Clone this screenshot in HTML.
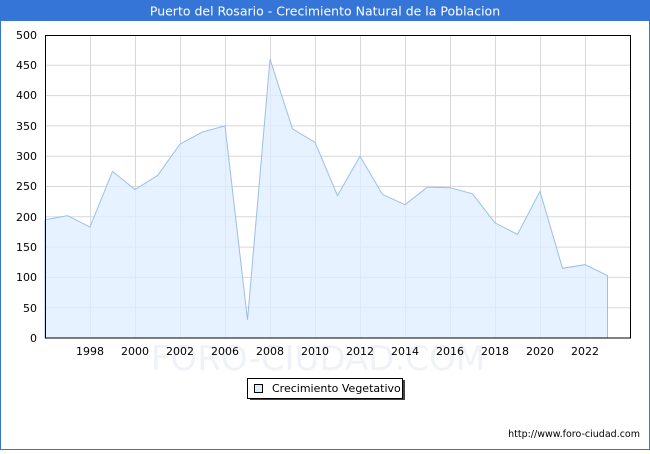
<!DOCTYPE html>
<html><head><meta charset="utf-8"><style>
body{margin:0;width:650px;height:450px;overflow:hidden;background:#fff;font-family:"DejaVu Sans","Liberation Sans",sans-serif}
</style></head><body>
<svg width="650" height="450" xmlns="http://www.w3.org/2000/svg" font-family="DejaVu Sans, Liberation Sans, sans-serif">
<rect x="0.5" y="0.5" width="649" height="449" fill="#fff" stroke="#3575d8"/>
<rect x="0" y="0" width="650" height="21" fill="#3575d8"/>
<text x="325" y="15.5" text-anchor="middle" fill="#fff" font-size="12.5">Puerto del Rosario - Crecimiento Natural de la Poblacion</text>
<g stroke="#d8d8d8" stroke-width="1">
<line x1="45" x2="630" y1="307.7" y2="307.7"/><line x1="45" x2="630" y1="277.4" y2="277.4"/><line x1="45" x2="630" y1="247.1" y2="247.1"/><line x1="45" x2="630" y1="216.8" y2="216.8"/><line x1="45" x2="630" y1="186.5" y2="186.5"/><line x1="45" x2="630" y1="156.2" y2="156.2"/><line x1="45" x2="630" y1="125.9" y2="125.9"/><line x1="45" x2="630" y1="95.6" y2="95.6"/><line x1="45" x2="630" y1="65.3" y2="65.3"/>
<line x1="90.5" x2="90.5" y1="35" y2="338"/><line x1="135.5" x2="135.5" y1="35" y2="338"/><line x1="180.5" x2="180.5" y1="35" y2="338"/><line x1="225.5" x2="225.5" y1="35" y2="338"/><line x1="270.5" x2="270.5" y1="35" y2="338"/><line x1="315.5" x2="315.5" y1="35" y2="338"/><line x1="360.5" x2="360.5" y1="35" y2="338"/><line x1="405.5" x2="405.5" y1="35" y2="338"/><line x1="450.5" x2="450.5" y1="35" y2="338"/><line x1="495.5" x2="495.5" y1="35" y2="338"/><line x1="540.5" x2="540.5" y1="35" y2="338"/><line x1="585.5" x2="585.5" y1="35" y2="338"/>
</g>
<text x="318" y="370" text-anchor="middle" font-size="34" fill="#f0f2fa">FORO-CIUDAD.COM</text>
<polygon fill="#ddeeff" fill-opacity="0.75" stroke="#9bbfe8" points="45,338 45,219.8 67.5,215.6 90,227.1 112.5,171.4 135,189.5 157.5,175.6 180,144.1 202.5,132 225,125.9 247.5,319.8 270,59.2 292.5,128.9 315,142.3 337.5,195.6 360,156.2 382.5,194.4 405,204.7 427.5,187.1 450,187.7 472.5,193.8 495,222.9 517.5,234.4 540,191.3 562.5,268.3 585,264.7 607.5,275.6 607.5,338"/>
<rect x="45.5" y="35.5" width="585" height="302.5" fill="none" stroke="#000"/>
<g font-size="11" fill="#000" text-anchor="end">
<text x="37" y="342">0</text><text x="37" y="312">50</text><text x="37" y="281">100</text><text x="37" y="251">150</text><text x="37" y="221">200</text><text x="37" y="190">250</text><text x="37" y="160">300</text><text x="37" y="130">350</text><text x="37" y="99">400</text><text x="37" y="69">450</text><text x="37" y="39">500</text>
</g>
<g font-size="11" fill="#000" text-anchor="middle">
<text x="90" y="355">1998</text><text x="135" y="355">2000</text><text x="180" y="355">2002</text><text x="225" y="355">2006</text><text x="270" y="355">2008</text><text x="315" y="355">2010</text><text x="360" y="355">2012</text><text x="405" y="355">2014</text><text x="450" y="355">2016</text><text x="495" y="355">2018</text><text x="540" y="355">2020</text><text x="585" y="355">2022</text>
</g>
<rect x="250" y="380" width="155" height="20" fill="#444"/>
<rect x="247.5" y="378.5" width="155" height="20" fill="#fff" stroke="#000"/>
<rect x="254.5" y="384.5" width="8" height="8" fill="#ddeeff" stroke="#000"/>
<text x="272" y="392" font-size="11">Crecimiento Vegetativo</text>
<text x="640" y="437" font-size="9.5" text-anchor="end">http://www.foro-ciudad.com</text>
</svg>
</body></html>
